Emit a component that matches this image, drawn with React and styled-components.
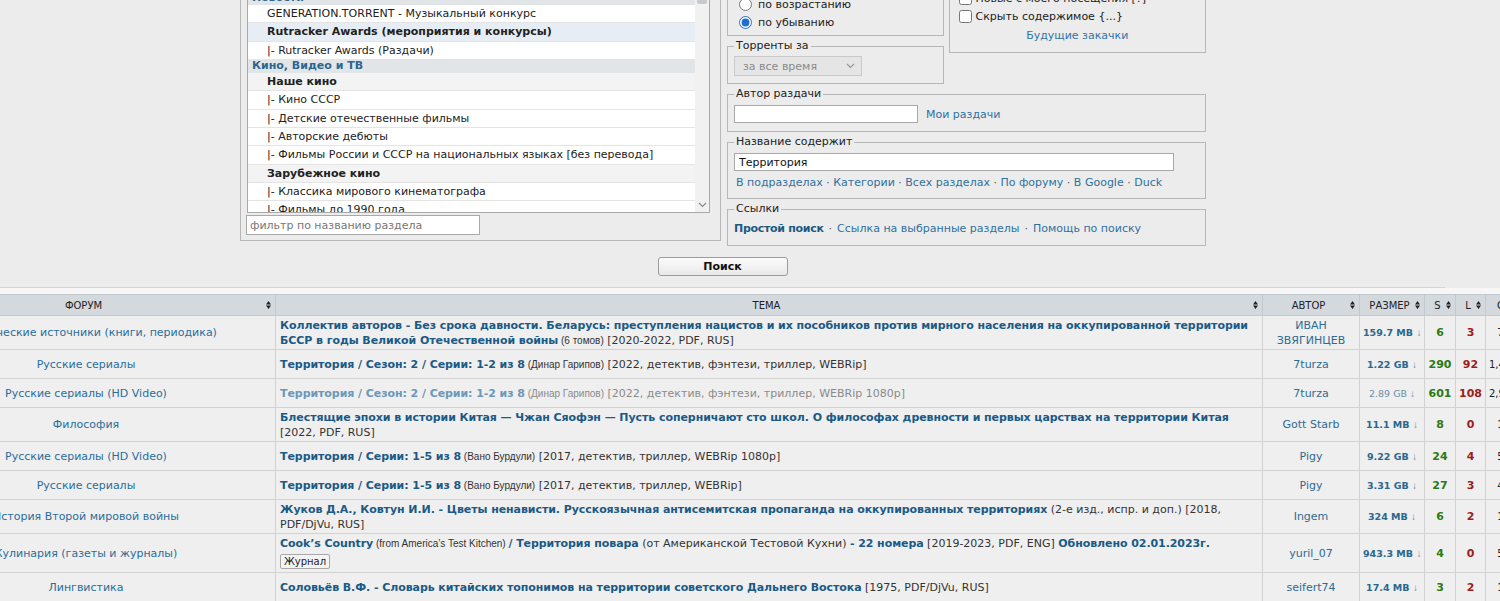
import React from "react";
import styled, { createGlobalStyle } from "styled-components";

const GlobalStyle = createGlobalStyle`
  html, body { margin: 0; padding: 0; background: #ececec; overflow: hidden; }
  body { font-family: "DejaVu Sans", Verdana, sans-serif; font-size: 11px; color: #222; }
  * { box-sizing: border-box; }
`;

const Page = styled.div`
  width: 1500px;
  height: 601px;
  overflow: hidden;
`;

const SearchPanel = styled.section`
  margin-top: -43px;
  padding: 0 0 11px 240px;
  border-bottom: 1px solid #d4d4d4;
  display: flex;
  flex-direction: column;
  width: 1205px;
  box-sizing: content-box;
`;

const TopRow = styled.div`
  display: flex;
  align-items: flex-start;
  gap: 6px;
`;

const Column = styled.div`
  display: flex;
  flex-direction: column;
  gap: 3px;
  width: ${(p) => p.$w}px;
`;

const SubRow = styled.div`
  display: flex;
  align-items: flex-start;
  gap: 5px;
`;

const Fieldset = styled.fieldset`
  margin: 0;
  min-width: 0;
  width: ${(p) => (p.$w ? `${p.$w}px` : "auto")};
  border: 1px solid #b7b7b7;
  padding: ${(p) => p.$pt ?? 2}px ${(p) => p.$px ?? 6}px ${(p) => p.$pb ?? 6}px;
`;

const Legend = styled.legend`
  padding: 0 2px;
  line-height: 14px;
  font-size: 11px;
  color: #222;
`;

/* ---------- forum list ---------- */
const ForumList = styled.div`
  display: flex;
  width: 463px;
  height: 240px;
  border: 1px solid #a9a9a9;
  background: #fff;
  overflow: hidden;
`;

const ListBody = styled.div`
  flex: 1;
  min-width: 0;
`;

const ListItem = styled.div`
  height: ${(p) => (p.$cat ? 12.6 : 18.4)}px;
  line-height: ${(p) => (p.$cat ? 12.6 : 17.4)}px;
  padding-left: ${(p) => (p.$cat ? 4 : 19)}px;
  font-size: 11px;
  white-space: nowrap;
  overflow: hidden;
  font-weight: ${(p) => (p.$bold || p.$cat ? 700 : 400)};
  color: ${(p) => (p.$cat ? "#2a6690" : "#222")};
  background: ${(p) =>
    p.$cat ? "#e2e5e8" : p.$sel ? "#e7edf4" : p.$bold ? "#f3f3f3" : "#fff"};
  border-bottom: ${(p) => (p.$cat ? "none" : "1px solid #e4e4e4")};
`;

const Scrollbar = styled.div`
  width: 14px;
  background: #f1f1f1;
  display: flex;
  flex-direction: column;
  justify-content: space-between;
  align-items: center;
  padding-bottom: 4px;
`;

const Thumb = styled.div`
  width: 10px;
  height: 30px;
  background: #c9c9c9;
  border-radius: 2px;
`;

const FilterInput = styled.input`
  margin-top: 2px;
  margin-left: -1px;
  width: 234px;
  height: 20px;
  border: 1px solid #a9a9a9;
  background: #fff;
  font: 11px "DejaVu Sans", sans-serif;
  padding: 0 3px;
  &::placeholder { color: #777; }
`;

/* ---------- controls ---------- */
const FakeSelect = styled.div`
  display: flex;
  align-items: center;
  justify-content: space-between;
  width: ${(p) => p.$w}px;
  height: 20px;
  border: 1px solid #cacaca;
  background: ${(p) => (p.$disabled ? "#e5e5e5" : "#fff")};
  color: ${(p) => (p.$disabled ? "#8a8a8a" : "#222")};
  padding: 0 6px 0 8px;
  font-size: 11px;
`;

const CtrlRow = styled.div`
  display: flex;
  align-items: center;
  gap: 8px;
  height: 22px;
`;

const OptRow = styled.label`
  display: flex;
  align-items: center;
  height: 18px;
  padding-left: ${(p) => p.$indent ?? 0}px;
  font-size: 11px;
  color: #222;
  white-space: nowrap;
  input {
    margin: 0 ${(p) => p.$gap ?? 4}px 0 0;
    width: 13px;
    height: 13px;
    accent-color: #1f6fd1;
  }
`;

const TextInput = styled.input`
  width: ${(p) => p.$w}px;
  height: 18px;
  border: 1px solid #a9a9a9;
  background: #fff;
  font: 11px "DejaVu Sans", sans-serif;
  color: #111;
  padding: 0 4px;
`;

const A = styled.a`
  color: ${(p) => p.$c || "#2f70a0"};
  font-weight: ${(p) => (p.$bold ? 700 : 400)};
  letter-spacing: ${(p) => (p.$bold ? "-0.3px" : "normal")};
  text-decoration: none;
  cursor: pointer;
`;

const LinkLine = styled.div`
  line-height: ${(p) => p.$lh ?? 18}px;
  margin-top: ${(p) => p.$mt ?? 0}px;
  padding-left: ${(p) => p.$pl ?? 0}px;
  text-align: ${(p) => p.$align || "left"};
  font-size: 11px;
  white-space: nowrap;
`;

const Dot = styled.span`
  color: #555;
  margin: 0 ${(p) => p.$m ?? 4}px;
`;

const ButtonRow = styled.div`
  display: flex;
  justify-content: center;
  width: 965px;
  margin-top: 11px;
`;

const SearchButton = styled.button`
  width: 130px;
  height: 19px;
  border: 1px solid #9c9c9c;
  border-radius: 3px;
  background: linear-gradient(#fbfbfb, #e9e9e9);
  font: bold 11px "DejaVu Sans", sans-serif;
  color: #111;
  padding: 0;
`;

/* ---------- results table ---------- */
const TableWrap = styled.div`
  padding-top: 6px;
  background: #f6f6f6;
`;

const Table = styled.table`
  border-collapse: collapse;
  table-layout: fixed;
  margin-left: -104px;
  width: 1619px;
`;

const Th = styled.th`
  height: 21px;
  padding: 0 4px;
  background: #d3d9dd;
  border: 1px solid #c3cacf;
  font-size: 10px;
  font-weight: 400;
  color: #222;
  text-transform: uppercase;
`;

const ThInner = styled.div`
  display: grid;
  grid-template-columns: 1fr auto;
  align-items: center;
  text-align: center;
`;

const Tr = styled.tr`
  background: #efefef;
  height: 29px;
`;

const Td = styled.td`
  border: 1px solid #d2d2d2;
  padding: ${(p) => (p.$topic ? "2px 4px 1px" : "1px 3px")};
  line-height: 15px;
  vertical-align: middle;
  text-align: ${(p) => (p.$topic ? "left" : "center")};
  white-space: ${(p) => (p.$nowrap ? "nowrap" : "normal")};
  overflow: hidden;
`;

const ForumLink = styled.a`
  color: #2b6d9a;
  font-size: 11px;
  white-space: nowrap;
`;

const TitleLink = styled.a`
  color: ${(p) => (p.$faded ? "#6b98b8" : "#1b5a86")};
  font-weight: 700;
  font-size: 11px;
  letter-spacing: -0.07px;
`;

const Meta = styled.span`
  color: ${(p) => (p.$faded ? "#8a8a8a" : "#333")};
  font-size: 11px;
`;

const Paren = styled.span`
  color: ${(p) => (p.$faded ? "#8a8a8a" : "#333")};
  font-family: "Liberation Sans", Arial, sans-serif;
  font-size: 10px;
`;

const Badge = styled.span`
  display: inline-block;
  margin: 3px 0 2px;
  padding: 0 3px;
  line-height: 13px;
  border: 1px solid #a8a8a8;
  border-radius: 2px;
  background: #f4f4f4;
  font-size: 10px;
  color: #222;
`;

const AuthorLink = styled.a`
  color: #2e6b93;
  font-size: 11px;
`;

const SizeLink = styled.a`
  color: ${(p) => (p.$faded ? "#6d8ea6" : "#2a6890")};
  font-weight: ${(p) => (p.$faded ? 400 : 700)};
  font-size: 9.5px;
  white-space: nowrap;
`;

const Arrow = styled.span`
  font-family: "Liberation Sans", Arial, sans-serif;
  font-weight: 400;
  font-size: 10px;
  color: #6a8ca4;
`;

const Num = styled.b`
  font-size: 11px;
  color: ${(p) => p.$c};
`;

const SmallNum = styled.span`
  font-size: 10px;
  color: #222;
  white-space: nowrap;
`;

const SortIcon = () => (
  <svg width="5" height="8" viewBox="0 0 5 8">
    <path d="M2.5 0 L5 3.4 H0 Z M2.5 8 L0 4.6 H5 Z" fill="#222" />
  </svg>
);

const Chevron = ({ color = "#777" }) => (
  <svg width="9" height="6" viewBox="0 0 9 6">
    <path d="M1 1 L4.5 4.5 L8 1" fill="none" stroke={color} strokeWidth="1.2" />
  </svg>
);

const listItems = [
  { t: "Все имеющиеся" },
  { t: "Новости", cat: true },
  { t: "GENERATION.TORRENT - Музыкальный конкурс" },
  { t: "Rutracker Awards (мероприятия и конкурсы)", bold: true, sel: true },
  { t: "|- Rutracker Awards (Раздачи)" },
  { t: "Кино, Видео и ТВ", cat: true },
  { t: "Наше кино", bold: true },
  { t: "|- Кино СССР" },
  { t: "|- Детские отечественные фильмы" },
  { t: "|- Авторские дебюты" },
  { t: "|- Фильмы России и СССР на национальных языках [без перевода]" },
  { t: "Зарубежное кино", bold: true },
  { t: "|- Классика мирового кинематографа" },
  { t: "|- Фильмы до 1990 года" },
  { t: "|- Фильмы 1991-2000" },
];

const rows = [
  {
    forum: "Исторические источники (книги, периодика)",
    title: [["b", "Коллектив авторов - Без срока давности. Беларусь: преступления нацистов и их пособников против мирного населения на оккупированной территории БССР в годы Великой Отечественной войны"], ["p", " (6 томов)"], ["m", " [2020-2022, PDF, RUS]"]],
    author: "ИВАН ЗВЯГИНЦЕВ", size: "159.7 MB", s: "6", l: "3", c: "7",
  },
  {
    forum: "Русские сериалы",
    title: [["b", "Территория / Сезон: 2 / Серии: 1-2 из 8"], ["p", " (Динар Гарипов)"], ["m", " [2022, детектив, фэнтези, триллер, WEBRip]"]],
    author: "7turza", size: "1.22 GB", s: "290", l: "92", c: "1,482",
  },
  {
    forum: "Русские сериалы (HD Video)", faded: true,
    title: [["b", "Территория / Сезон: 2 / Серии: 1-2 из 8"], ["p", " (Динар Гарипов)"], ["m", " [2022, детектив, фэнтези, триллер, WEBRip 1080p]"]],
    author: "7turza", size: "2.89 GB", s: "601", l: "108", c: "2,915",
  },
  {
    forum: "Философия",
    title: [["b", "Блестящие эпохи в истории Китая — Чжан Сяофэн — Пусть соперничают сто школ. О философах древности и первых царствах на территории Китая"], ["m", " [2022, PDF, RUS]"]],
    author: "Gott Starb", size: "11.1 MB", s: "8", l: "0", c: "1",
  },
  {
    forum: "Русские сериалы (HD Video)",
    title: [["b", "Территория / Серии: 1-5 из 8"], ["p", " (Вано Бурдули)"], ["m", " [2017, детектив, триллер, WEBRip 1080p]"]],
    author: "Pigy", size: "9.22 GB", s: "24", l: "4", c: "5",
  },
  {
    forum: "Русские сериалы",
    title: [["b", "Территория / Серии: 1-5 из 8"], ["p", " (Вано Бурдули)"], ["m", " [2017, детектив, триллер, WEBRip]"]],
    author: "Pigy", size: "3.31 GB", s: "27", l: "3", c: "4",
  },
  {
    forum: "История Второй мировой войны",
    title: [["b", "Жуков Д.А., Ковтун И.И. - Цветы ненависти. Русскоязычная антисемитская пропаганда на оккупированных территориях"], ["m", " (2-е изд., испр. и доп.) [2018, PDF/DjVu, RUS]"]],
    author: "Ingem", size: "324 MB", s: "6", l: "2", c: "1",
  },
  {
    forum: "Кулинария (газеты и журналы)",
    title: [["b", "Cook’s Country"], ["p", " (from America’s Test Kitchen) "], ["b", "/ Территория повара"], ["m", " (от Американской Тестовой Кухни) "], ["b", "- 22 номера"], ["m", " [2019-2023, PDF, ENG] "], ["b", "Обновлено 02.01.2023г."]],
    badge: "Журнал",
    author: "yuril_07", size: "943.3 MB", s: "4", l: "0", c: "5",
  },
  {
    forum: "Лингвистика",
    title: [["b", "Соловьёв В.Ф. - Словарь китайских топонимов на территории советского Дальнего Востока"], ["m", " [1975, PDF/DjVu, RUS]"]],
    author: "seifert74", size: "17.4 MB", s: "3", l: "2", c: "1",
  },
];

const cols = [379, 987, 97, 65, 31, 30, 30];
const heads = [
  ["Форум", true],
  ["Тема", true],
  ["Автор", true],
  ["Размер", true],
  ["S", true],
  ["L", true],
  ["C", false],
];

const renderPart = ([k, t], j, faded) => {
  if (k === "b") return <TitleLink key={j} $faded={faded}>{t}</TitleLink>;
  if (k === "p") return <Paren key={j} $faded={faded}>{t}</Paren>;
  return <Meta key={j} $faded={faded}>{t}</Meta>;
};

export default function App() {
  return (
    <Page>
      <GlobalStyle />
      <SearchPanel>
        <TopRow>
          <Fieldset $w={481} $pb={5}>
            <Legend>Форум</Legend>
            <ForumList>
              <ListBody>
                {listItems.map((it, i) => (
                  <ListItem key={i} $cat={it.cat} $bold={it.bold} $sel={it.sel}>
                    {it.t}
                  </ListItem>
                ))}
              </ListBody>
              <Scrollbar>
                <Thumb />
                <Chevron color="#888" />
              </Scrollbar>
            </ForumList>
            <FilterInput placeholder="фильтр по названию раздела" />
          </Fieldset>

          <Column $w={479}>
            <SubRow>
              <Column $w={217}>
                <Fieldset $pb={4}>
                  <Legend>Упорядочить по</Legend>
                  <CtrlRow>
                    <FakeSelect $w={150}>
                      Зарегистрирован <Chevron />
                    </FakeSelect>
                  </CtrlRow>
                  <OptRow $indent={5} $gap={6}>
                    <input type="radio" name="ord" /> по возрастанию
                  </OptRow>
                  <OptRow $indent={5} $gap={6}>
                    <input type="radio" name="ord" defaultChecked /> по убыванию
                  </OptRow>
                </Fieldset>
                <Fieldset>
                  <Legend>Торренты за</Legend>
                  <CtrlRow>
                    <FakeSelect $w={128} $disabled>
                      за все время <Chevron color="#999" />
                    </FakeSelect>
                  </CtrlRow>
                </Fieldset>
              </Column>
              <Fieldset $w={258} $px={9} $pt={0} $pb={7}>
                <Legend>Показывать только</Legend>
                <OptRow>
                  <input type="checkbox" /> Только завершённые
                </OptRow>
                <OptRow>
                  <input type="checkbox" /> Новые с моего посещения [?]
                </OptRow>
                <OptRow>
                  <input type="checkbox" /> Скрыть содержимое {"{...}"}
                </OptRow>
                <LinkLine $align="center" $mt={2}>
                  <A $c="#2f75a8">Будущие закачки</A>
                </LinkLine>
              </Fieldset>
            </SubRow>

            <Fieldset>
              <Legend>Автор раздачи</Legend>
              <CtrlRow>
                <TextInput $w={184} />
                <A $c="#2f70a0">Мои раздачи</A>
              </CtrlRow>
            </Fieldset>

            <Fieldset>
              <Legend>Название содержит</Legend>
              <CtrlRow>
                <TextInput $w={440} defaultValue="Территория" />
              </CtrlRow>
              <LinkLine $mt={1} $pl={2}>
                <A>В подразделах</A><Dot $m={3.5}>·</Dot>
                <A>Категории</A><Dot $m={3.5}>·</Dot>
                <A>Всех разделах</A><Dot $m={3.5}>·</Dot>
                <A>По форуму</A><Dot $m={3.5}>·</Dot>
                <A>В Google</A><Dot $m={3.5}>·</Dot>
                <A>Duck</A>
              </LinkLine>
            </Fieldset>

            <Fieldset>
              <Legend>Ссылки</Legend>
              <LinkLine $lh={20} $mt={1}>
                <A $bold $c="#1d5a82">Простой поиск</A><Dot $m={5}>·</Dot>
                <A>Ссылка на выбранные разделы</A><Dot $m={5}>·</Dot>
                <A>Помощь по поиску</A>
              </LinkLine>
            </Fieldset>
          </Column>
        </TopRow>
        <ButtonRow>
          <SearchButton type="button">Поиск</SearchButton>
        </ButtonRow>
      </SearchPanel>

      <TableWrap>
        <Table>
          <colgroup>
            {cols.map((w, i) => (
              <col key={i} style={{ width: w }} />
            ))}
          </colgroup>
          <thead>
            <tr>
              {heads.map(([h, sort]) => (
                <Th key={h}>
                  <ThInner>
                    <span>{h}</span>
                    {sort && <SortIcon />}
                  </ThInner>
                </Th>
              ))}
            </tr>
          </thead>
          <tbody>
            {rows.map((r, i) => (
              <Tr key={i}>
                <Td $nowrap>
                  <ForumLink>{r.forum}</ForumLink>
                </Td>
                <Td $topic>
                  {r.title.map((part, j) => renderPart(part, j, r.faded))}
                  {r.badge && (
                    <div>
                      <Badge>{r.badge}</Badge>
                    </div>
                  )}
                </Td>
                <Td>
                  <AuthorLink>{r.author}</AuthorLink>
                </Td>
                <Td $nowrap>
                  <SizeLink $faded={r.faded}>
                    {r.size} <Arrow>↓</Arrow>
                  </SizeLink>
                </Td>
                <Td>
                  <Num $c="#2b7a12">{r.s}</Num>
                </Td>
                <Td>
                  <Num $c="#9c1c1c">{r.l}</Num>
                </Td>
                <Td $nowrap>
                  <SmallNum>{r.c}</SmallNum>
                </Td>
              </Tr>
            ))}
          </tbody>
        </Table>
      </TableWrap>
    </Page>
  );
}
